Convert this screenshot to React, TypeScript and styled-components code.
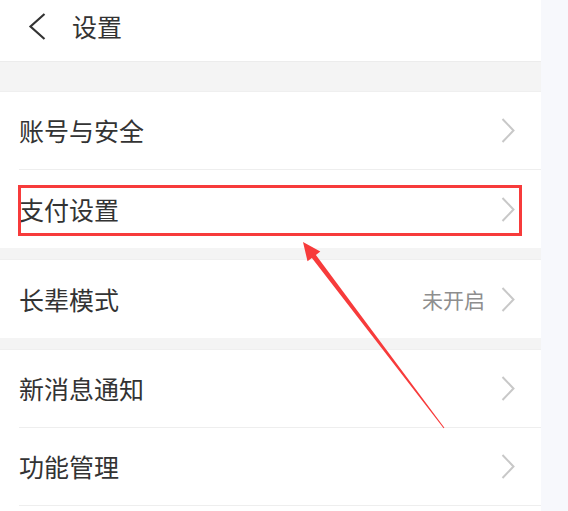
import styled, { createGlobalStyle } from 'styled-components';

const GlobalStyle = createGlobalStyle`
    html, body {
        margin: 0;
        padding: 0;
        background: #f7f8fc;
        overflow: hidden;
    }
    *, *::before, *::after {
        box-sizing: border-box;
    }
`;

const Page = styled.div`
    width: 568px;
    height: 511px;
    position: relative;
    display: flex;
    font-family: "Noto Sans CJK SC", "Noto Sans", sans-serif;
    overflow: hidden;
`;

const Panel = styled.div`
    width: 541px;
    height: 100%;
    background: #f4f4f4;
    display: flex;
    flex-direction: column;
`;

const Side = styled.div`
    flex: 1;
    background: #f7f8fc;
`;

const Header = styled.div`
    flex-shrink: 0;
    height: 62px;
    background: #fff;
    border-bottom: 1px solid #ececec;
    display: flex;
    align-items: center;
    padding: 0 0 8px 28px;
`;

const Title = styled.span`
    margin-left: 26px;
    font-size: 25px;
    color: #333;
    line-height: 1;
`;

const Group = styled.div<{ $gap: number; $grow?: boolean }>`
    flex-shrink: 0;
    margin-top: ${p => p.$gap}px;
    background: #fff;
    border-top: 1px solid #efefef;
    flex-grow: ${p => (p.$grow ? 1 : 0)};
`;

const Row = styled.div<{ $marked?: boolean; $last?: boolean }>`
    position: relative;
    padding-left: 19px;

    ${p => p.$last && `
        & > div {
            border-bottom: none;
        }
    `}

    ${p => p.$marked && `
        &::after {
            content: '';
            position: absolute;
            left: 18px;
            top: 15px;
            width: 504px;
            height: 51px;
            border: 3px solid #f73b3b;
        }
    `}
`;

const RowInner = styled.div`
    height: 78px;
    border-bottom: 1px solid #eeeeee;
    display: flex;
    align-items: center;
    padding-right: 26px;
`;

const Label = styled.span`
    flex: 1;
    font-size: 25px;
    color: #333;
    line-height: 1;
`;

const Value = styled.span`
    font-size: 21px;
    color: #8e8e8e;
    margin-right: 16px;
    line-height: 1;
`;

const Arrow = styled.svg`
    position: absolute;
    left: 0;
    top: 0;
    pointer-events: none;
`;

const Chevron = () => (
    <svg width="14" height="25" viewBox="0 0 14 25">
        <polyline points="1.5,1 12.5,12.5 1.5,24" fill="none" stroke="#c8c8c8" strokeWidth="2" />
    </svg>
);

const BackIcon = () => (
    <svg width="18" height="27" viewBox="0 0 18 27">
        <polyline points="16.5,1 2.5,13.5 16.5,26" fill="none" stroke="#333" strokeWidth="2.2" />
    </svg>
);

type Item = { label: string; value?: string; marked?: boolean };

const groups: { gap: number; items: Item[]; open?: boolean }[] = [
    { gap: 29, items: [{ label: '账号与安全' }, { label: '支付设置', marked: true }] },
    { gap: 11, items: [{ label: '长辈模式', value: '未开启' }] },
    { gap: 11, items: [{ label: '新消息通知' }, { label: '功能管理' }], open: true },
];

function App() {
    return (
        <Page>
            <GlobalStyle />
            <Panel>
                <Header>
                    <BackIcon />
                    <Title>设置</Title>
                </Header>
                {groups.map((g, gi) => (
                    <Group key={gi} $gap={g.gap} $grow={gi === groups.length - 1}>
                        {g.items.map((item, ii) => (
                            <Row
                                key={item.label}
                                $marked={item.marked}
                                $last={!g.open && ii === g.items.length - 1}
                            >
                                <RowInner>
                                    <Label>{item.label}</Label>
                                    {item.value && <Value>{item.value}</Value>}
                                    <Chevron />
                                </RowInner>
                            </Row>
                        ))}
                    </Group>
                ))}
            </Panel>
            <Side />
            <Arrow width="568" height="511" viewBox="0 0 568 511">
                <polygon
                    points="303,242 320.3,251.6 315.9,254.9 444.4,427.7 443.6,428.3 311.9,257.9 307.5,261.2"
                    fill="#f73b3b"
                />
            </Arrow>
        </Page>
    );
}

export default App;
